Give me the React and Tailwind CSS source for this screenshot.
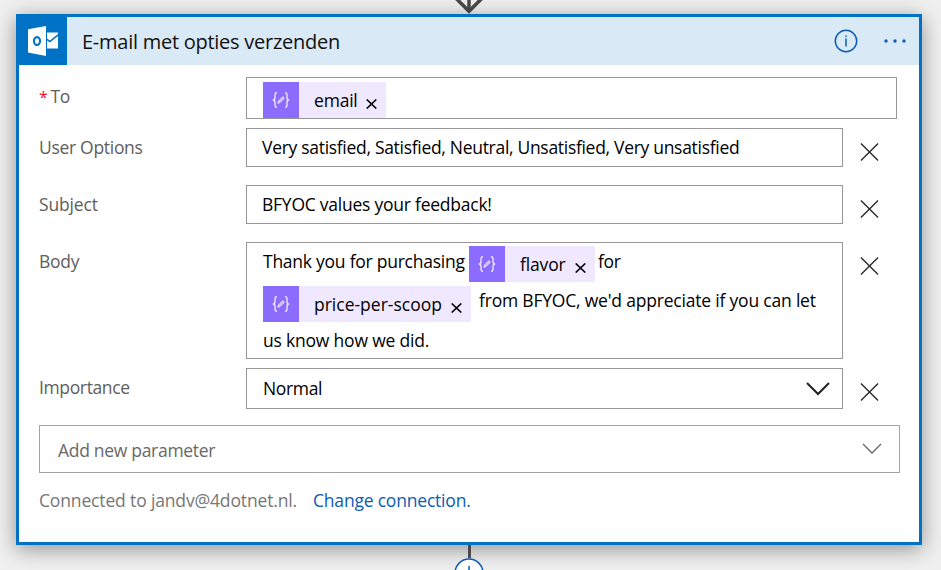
import React from "react";

function Cross({ className }) {
  return (
    <svg viewBox="0 0 20 20" className={className} fill="none" stroke="#2b2b33" strokeWidth="1.5">
      <path d="M1 1 L19 19 M19 1 L1 19" />
    </svg>
  );
}

function Token({ label, className, labelClass }) {
  return (
    <div className={"flex h-9 shrink-0 bg-[#efe8ff] " + className}>
      <div className="flex h-9 w-9 shrink-0 items-center justify-center bg-[#8c6cff]">
        <svg viewBox="0 0 18 16" className="h-4 w-[18px]" fill="none" stroke="#f1ecff" strokeWidth="1.3">
          <path d="M5 .7C3 .7 3 1.7 3 3v2.500C3 7 2.400 8 .8 8C2.400 8 3 9 3 10.500V13c0 1.300 0 2.300 2 2.300M13 .7c2 0 2 1 2 2.300v2.500C15 7 15.600 8 17.200 8C15.600 8 15 9 15 10.500V13c0 1.300 0 2.300-2 2.300" />
          <path d="M5.800 11.300L6.500 9L10.800 4.700L12.300 6.200L8 10.500Z" fill="#c9b8ff" strokeWidth="0.9" />
        </svg>
      </div>
      <span className={"ml-[15px] leading-9 whitespace-nowrap " + labelClass}>{label}</span>
      <svg viewBox="0 0 11 10" className="mt-[17px] mr-[9px] ml-auto h-[10px] w-[11px] shrink-0" fill="none" stroke="#000" strokeWidth="1.6">
        <path d="M.7 .5L10.300 9.500M10.300 .5L.7 9.500" />
      </svg>
    </div>
  );
}

function Row({ label, labelClass, className, children, removable }) {
  return (
    <div className={"flex items-start " + className}>
      <div className="w-[207px] shrink-0 pt-[5px] leading-7 whitespace-nowrap text-[#605e5c]">
        <span className={labelClass}>{label}</span>
      </div>
      {children}
      {removable && <Cross className="mt-[14px] ml-[17px] h-5 w-[19px] shrink-0" />}
    </div>
  );
}

export default function App() {
  return (
    <div className="h-[570px] w-[941px] overflow-hidden bg-[#f0f0f0] font-['Open_Sans','Noto_Sans',sans-serif] text-[17.5px] text-black">
      <div className="flex h-[14px] justify-center pr-[3px]">
        <svg viewBox="0 0 30 14" className="h-[14px] w-[30px]" fill="none" stroke="#4a4a4a">
          <path d="M15 0V11" strokeWidth="3.500" />
          <path d="M2.200 -1.500L15 11.200L27.800 -1.500" strokeWidth="3.600" />
        </svg>
      </div>

      <div className="relative ml-4 h-[531px] w-[906px] border-[3px] border-[#0072c6] bg-white shadow-[0_4px_20px_rgba(0,0,0,0.4)]">
        <div className="flex h-12 items-center bg-[#dae9f6]">
          <div className="flex h-12 w-12 shrink-0 items-center justify-center bg-[#0072c6]">
            <svg viewBox="0 0 30 30" className="h-[30px] w-[30px]">
              <path d="M0 3.200L18 0V30L0 26.500Z" fill="#fff" />
              <ellipse cx="9" cy="15" rx="3" ry="3.900" fill="none" stroke="#0072c6" strokeWidth="2.100" />
              <path d="M19 6.500H30V8L22 14.500L19 12.500Z" fill="#fff" />
              <path d="M19 14.500L22 16.500L30 10V22.500H19Z" fill="#fff" />
            </svg>
          </div>
          <h1 className="ml-[15px] pt-[2px] text-[20px] tracking-[-0.26px] whitespace-nowrap text-[#111]">E-mail met opties verzenden</h1>
          <svg viewBox="0 0 24 24" className="ml-auto h-6 w-6" fill="none" stroke="#0b5cb5" strokeWidth="1.500">
            <circle cx="12" cy="12" r="10.700" />
            <path d="M12 9.500V17.500M12 6.500V8" />
          </svg>
          <svg viewBox="0 0 22 4" className="mr-[13px] ml-[26px] h-1 w-[22px]" fill="#0b5cb5">
            <circle cx="2" cy="2" r="1.700" />
            <circle cx="11" cy="2" r="1.700" />
            <circle cx="20" cy="2" r="1.700" />
          </svg>
        </div>

        <div className="pl-5">
          <Row
            className="mt-3 h-[51px]"
            labelClass="tracking-[-0.4px]"
            label={<><span className="mr-[3px] text-[16px] text-[#e81123]">*</span>To</>}
          >
            <div className="flex h-[42px] w-[651px] border border-[#979797] pt-1 pl-4">
              <Token label="email" className="w-[123px]" labelClass="tracking-[-0.2px]" />
            </div>
          </Row>
          <Row className="h-[57px]" label="User Options" labelClass="tracking-[-0.3px]" removable>
            <div className="h-[39px] w-[597px] border border-[#979797] pl-[15px] leading-[37px] whitespace-nowrap">
              <span className="tracking-[-0.3px]">Very satisfied, Satisfied, Neutral, Unsatisfied, Very unsatisfied</span>
            </div>
          </Row>
          <Row className="h-[57px]" label="Subject" labelClass="tracking-[-0.15px]" removable>
            <div className="h-[39px] w-[597px] border border-[#979797] pl-[15px] leading-[37px] whitespace-nowrap">
              <span className="tracking-[-0.24px]">BFYOC values your feedback!</span>
            </div>
          </Row>
          <Row className="h-[126px]" label="Body" labelClass="tracking-[-0.25px]" removable>
            <div className="h-[117px] w-[597px] border border-[#979797] pt-[3px] pl-4 whitespace-nowrap">
              <div className="flex h-10">
                <span className="w-[206px] shrink-0 leading-[31px] tracking-[-0.25px]">Thank you for purchasing</span>
                <Token label="flavor" className="w-[126px]" labelClass="tracking-[-0.15px]" />
                <span className="ml-[3px] leading-[31px] tracking-[-0.3px]">for</span>
              </div>
              <div className="flex h-10">
                <Token label="price-per-scoop" className="w-[208px]" />
                <span className="ml-2 leading-[29px] tracking-[-0.2px]">from BFYOC, we'd appreciate if you can let</span>
              </div>
              <div className="leading-[29px] tracking-[-0.2px]">us know how we did.</div>
            </div>
          </Row>
          <Row className="h-[57px]" label="Importance" labelClass="tracking-[-0.37px]" removable>
            <div className="flex h-[41px] w-[597px] items-center justify-between border border-[#979797] pr-3 pl-4">
              <span className="pb-px tracking-[-0.35px]">Normal</span>
              <svg viewBox="0 0 24 14" className="h-[14px] w-6" fill="none" stroke="#222" strokeWidth="2">
                <path d="M1 1L12 12L23 1" />
              </svg>
            </div>
          </Row>
          <div className="flex h-12 w-[861px] items-center justify-between border border-[#a3a3a3] pr-[17px] pl-[18px] text-[#686868]">
            <span className="pt-[2px] tracking-[-0.3px]">Add new parameter</span>
            <svg viewBox="0 0 20 12" className="h-3 w-5" fill="none" stroke="#666" strokeWidth="1.300">
              <path d="M1 1L10 10L19 1" />
            </svg>
          </div>
          <div className="flex pt-[13px] leading-7 whitespace-nowrap">
            <span className="w-[274px] tracking-[-0.15px] text-[#767676]">Connected to jandv@4dotnet.nl.</span>
            <a className="tracking-[-0.2px] text-[#0b5cb5]">Change connection.</a>
          </div>
        </div>
      </div>

      <div className="relative flex h-[25px] flex-col items-center pr-[3px]">
        <div className="h-[13px] w-[3px] shrink-0 bg-[#4a4a4a]" />
        <svg viewBox="0 0 30 30" className="h-[30px] w-[30px] shrink-0" fill="none" stroke="#0b5cb5" strokeWidth="1.500">
          <circle cx="15" cy="15" r="14" fill="#fff" />
          <path d="M15 8V22M8 15H22" />
        </svg>
      </div>
    </div>
  );
}
